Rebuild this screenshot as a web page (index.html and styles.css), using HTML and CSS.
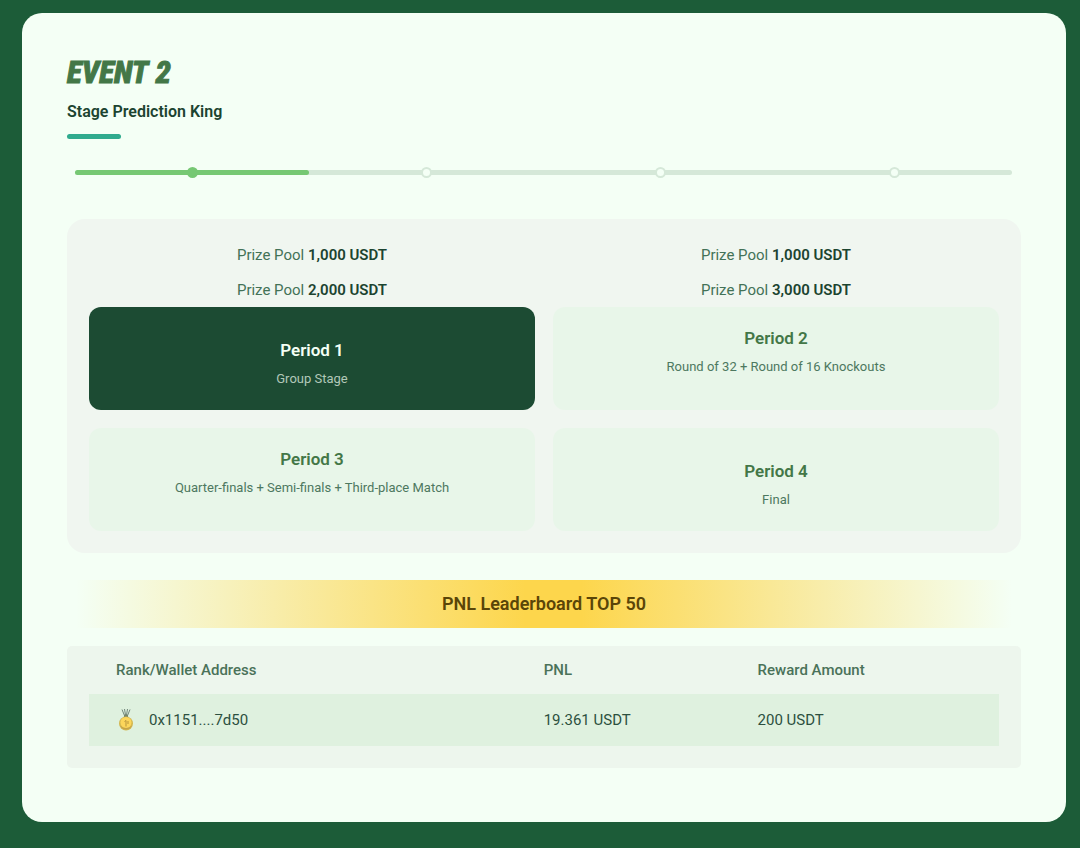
FILE: index.html
```html
<!DOCTYPE html>
<html lang="en">
<head>
<meta charset="utf-8">
<meta name="viewport" content="width=device-width, initial-scale=1">
<title>Event 2 - Stage Prediction King</title>
<link rel="stylesheet" href="styles.css">
</head>
<body>
<main class="card">
  <header class="heading">
    <h1 class="title"><span>EVENT</span> <span>2</span></h1>
    <h2 class="subtitle">Stage Prediction King</h2>
    <div class="accent"></div>
  </header>

  <ol class="timeline" aria-label="Period progress">
    <li class="step step-active"><span class="dot"></span></li>
    <li class="step"><span class="dot"></span></li>
    <li class="step"><span class="dot"></span></li>
    <li class="step"><span class="dot"></span></li>
  </ol>

  <section class="stages">
    <div class="pools">
      <p class="pool">Prize Pool <strong>1,000 USDT</strong></p>
      <p class="pool">Prize Pool <strong>1,000 USDT</strong></p>
      <p class="pool">Prize Pool <strong>2,000 USDT</strong></p>
      <p class="pool">Prize Pool <strong>3,000 USDT</strong></p>
    </div>
    <div class="periods">
      <button type="button" class="period period-low period-active" aria-pressed="true">
        <span class="period-name">Period 1</span>
        <span class="period-stage">Group Stage</span>
      </button>
      <button type="button" class="period">
        <span class="period-name">Period 2</span>
        <span class="period-stage">Round of 32 + Round of 16 Knockouts</span>
      </button>
      <button type="button" class="period">
        <span class="period-name">Period 3</span>
        <span class="period-stage">Quarter-finals + Semi-finals + Third-place Match</span>
      </button>
      <button type="button" class="period period-low">
        <span class="period-name">Period 4</span>
        <span class="period-stage">Final</span>
      </button>
    </div>
  </section>

  <h2 class="banner">PNL Leaderboard TOP 50</h2>

  <section class="board">
    <table class="ranks">
      <thead>
        <tr><th class="col-wallet">Rank/Wallet Address</th><th class="col-pnl">PNL</th><th>Reward Amount</th></tr>
      </thead>
      <tbody>
        <tr>
          <td>
            <div class="wallet">
              <svg class="medal" viewBox="0 0 20 24" role="img" aria-label="First place">
                <path d="M6 1.500L9.500 10M8.500 1L10 10M11.500 1L10 10M14 1.500L10.500 10" fill="none" stroke="#71867a" stroke-width="1"/>
                <path d="M8.500 6.500h3l1 3.500h-5z" fill="#75846a"/>
                <circle cx="10" cy="15.500" r="7" fill="#d4b852"/>
                <circle cx="10" cy="14.500" r="5.500" fill="#fcd65b"/>
                <path d="M4 17.500q6 5 12 0a6.500 6.500 0 0 1-12 0z" fill="#c5a449"/>
                <path d="M8.500 13.500l1.500-1v6M12 13v3" fill="none" stroke="#b8953d" stroke-width="1"/>
              </svg>
              <span>0x1151....7d50</span>
            </div>
          </td>
          <td>19.361 USDT</td>
          <td>200 USDT</td>
        </tr>
      </tbody>
    </table>
  </section>
</main>
</body>
</html>
```

FILE: styles.css
```css
* {
  box-sizing: border-box;
}

body {
  margin: 0;
  min-height: 100vh;
  padding: 13px 14px 26px 22px;
  background: #1c5c38;
  color: #204b35;
  font-family: Roboto, "Liberation Sans", sans-serif;
}

h1, h2, p, ol {
  margin: 0;
  padding: 0;
}

.card {
  padding: 45px 45px 54px;
  border-radius: 20px;
  background: #f4fff5;
}

.title {
  display: flex;
  gap: 7px;
  color: #437747;
  font: italic 800 31px/30px "Liberation Sans Narrow", "Roboto Condensed", "Liberation Sans", sans-serif;
  -webkit-text-stroke: 1px #437747;
}

.subtitle {
  margin-top: 12px;
  color: #1c4430;
  font-size: 16px;
  font-weight: 600;
  line-height: 24px;
}

.accent {
  width: 54px;
  height: 5px;
  margin-top: 10px;
  border-radius: 3px;
  background: #30ab8e;
}

.timeline {
  display: grid;
  grid-template-columns: repeat(4, 1fr);
  margin: 31px 9px 0 8px;
  border-radius: 3px;
  background: #d5e8d8;
  list-style: none;
}

.step {
  display: flex;
  align-items: center;
  justify-content: center;
  height: 5px;
  border-radius: 3px;
}

.step-active {
  background: #76c873;
}

.dot {
  flex: none;
  width: 11px;
  height: 11px;
  border: 2px solid #d5e8d8;
  border-radius: 50%;
  background: #f4fff5;
}

.step-active .dot {
  border-color: #76c873;
  background: #76c873;
}

.stages {
  margin-top: 44px;
  padding: 22px;
  border-radius: 18px;
  background: #f0f6f0;
}

.pools,
.periods {
  display: grid;
  grid-template-columns: repeat(2, minmax(0, 1fr));
  gap: 7px 18px;
}

.pool {
  color: #437257;
  font-size: 15px;
  line-height: 28px;
  text-align: center;
}

.pool strong {
  color: #1c4430;
  font-weight: 600;
}

.periods {
  row-gap: 18px;
  margin-top: 3px;
}

.period {
  display: flex;
  flex-direction: column;
  align-items: center;
  gap: 6px;
  min-height: 103px;
  padding: 19px 12px;
  border: 0;
  border-radius: 12px;
  background: #e8f6e9;
  color: #437747;
  font-family: inherit;
  cursor: pointer;
}

.period-low {
  padding-top: 31px;
}

.period-name {
  font-size: 17px;
  font-weight: 600;
  line-height: 24px;
}

.period-stage {
  color: #4d7860;
  font-size: 13px;
  line-height: 22px;
}

.period-active {
  background: #1c4b33;
  color: #f4fff5;
}

.period-active .period-stage {
  color: #b2c8b8;
}

.banner {
  margin: 27px 9px 0;
  background: linear-gradient(90deg, rgba(255, 214, 72, 0), #fdd64c 48%, #fdd64c 54%, rgba(255, 214, 72, 0));
  color: #5a4508;
  font-size: 18px;
  font-weight: 600;
  line-height: 48px;
  text-align: center;
}

.board {
  margin-top: 18px;
  padding: 0 22px 22px;
  border-radius: 5px;
  background: #edf6ed;
}

.ranks {
  width: 100%;
  border-collapse: collapse;
  table-layout: fixed;
  font-size: 15px;
  text-align: left;
}

.ranks th {
  height: 48px;
  padding: 0 0 0 27px;
  color: #4a7259;
  font-weight: 500;
}

.ranks .col-wallet {
  width: 47%;
}

.ranks .col-pnl {
  width: 23.5%;
}

.ranks td {
  height: 52px;
  padding: 0 0 0 27px;
  background: #dff1df;
  color: #2c5040;
}

.wallet {
  display: flex;
  align-items: center;
  gap: 13px;
}

.medal {
  width: 20px;
  height: 24px;
}
```
